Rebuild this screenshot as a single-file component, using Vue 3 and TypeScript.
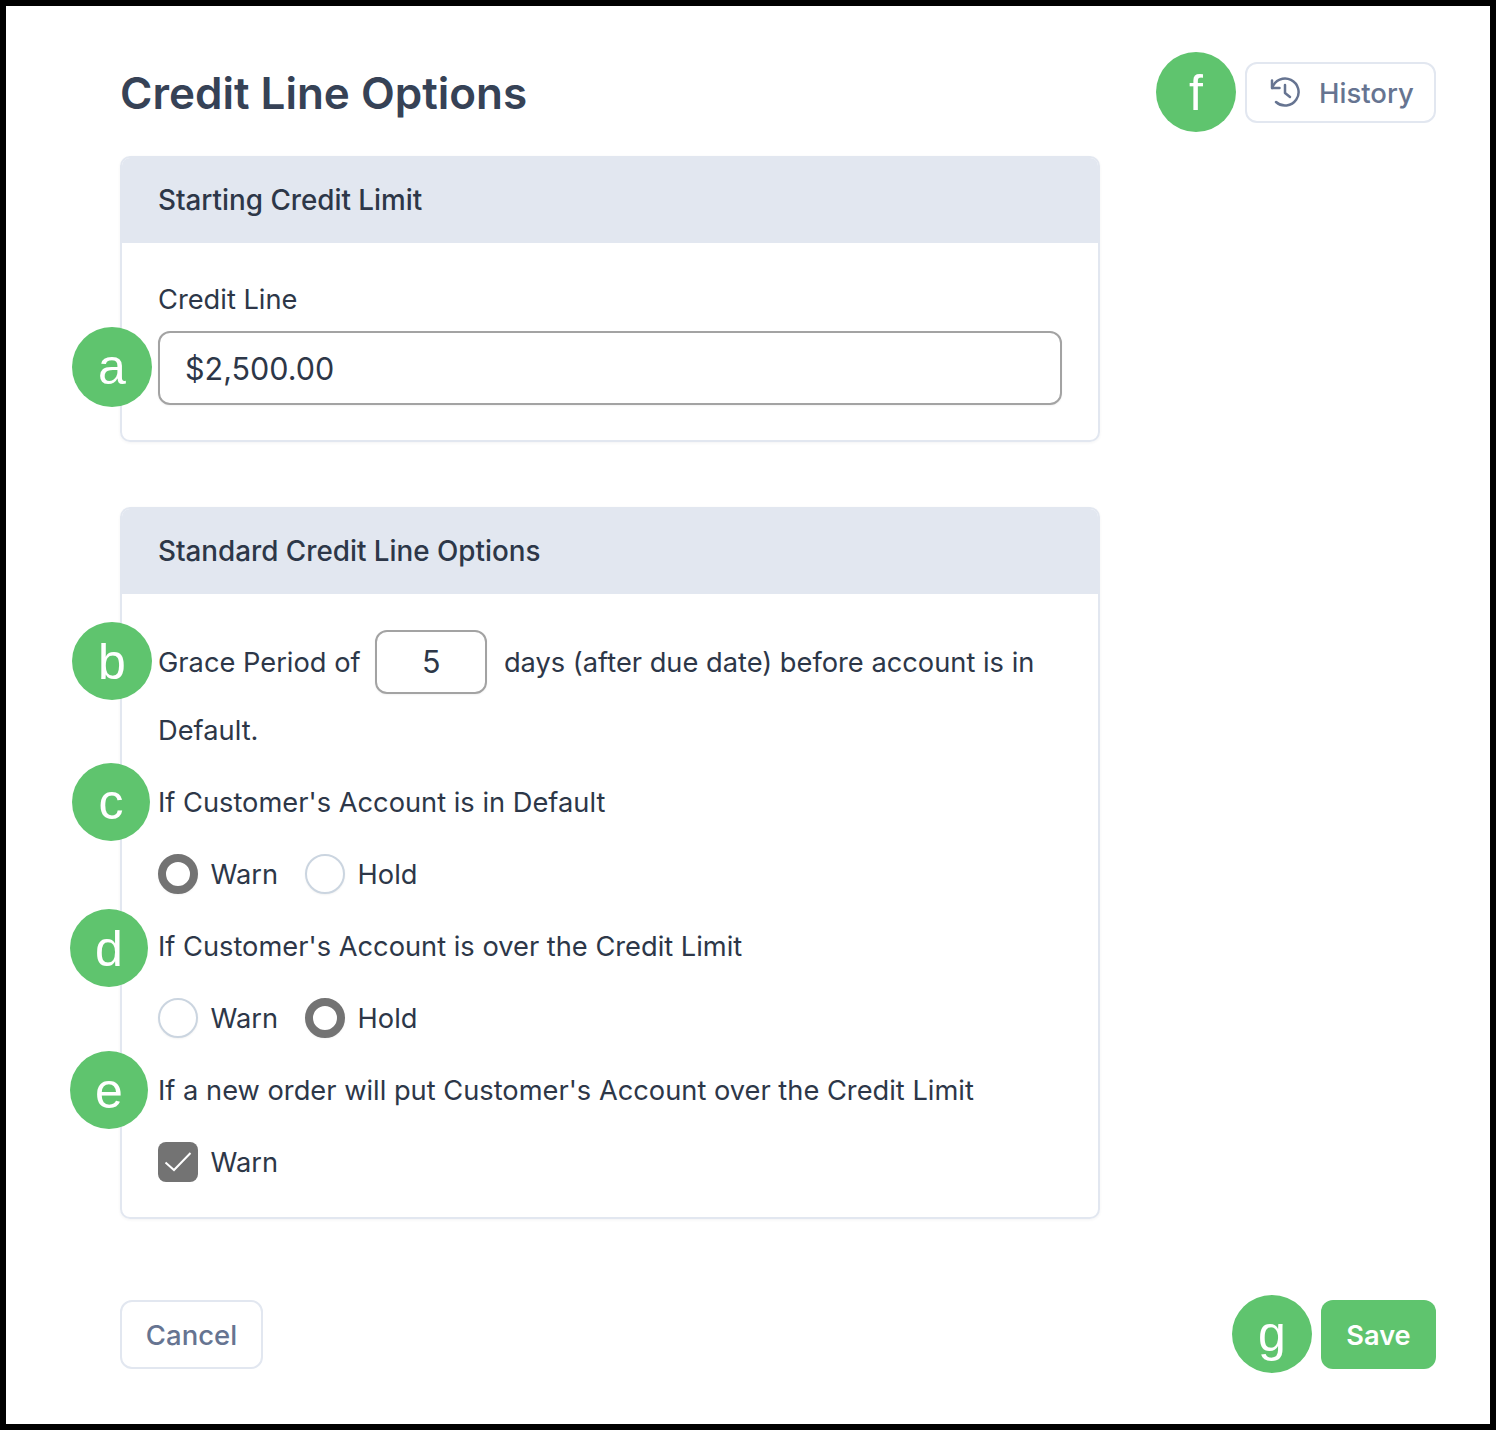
<script setup lang="ts">
interface Choice { label: string; checked: boolean }
const defaultChoices: Choice[] = [
  { label: 'Warn', checked: true },
  { label: 'Hold', checked: false },
]
const limitChoices: Choice[] = [
  { label: 'Warn', checked: false },
  { label: 'Hold', checked: true },
]
</script>

<template>
  <div class="page">
    <header class="top">
      <h1 class="title">Credit Line Options</h1>
      <button class="btn btn-outline history" type="button">
        <svg class="history-icon" viewBox="0 0 32 32" fill="none" stroke="currentColor" stroke-width="2.5" stroke-linecap="round" stroke-linejoin="round">
          <path d="M3 4.5V12h7.5" />
          <path d="M3.2 12A13.5 13.5 0 1 1 7 26" />
          <path d="M16 9v8l5 4" />
        </svg>
        History
      </button>
    </header>

    <section class="card">
      <h2 class="card-head">Starting Credit Limit</h2>
      <div class="card-body first-body">
        <label class="field-label" for="credit-line">Credit Line</label>
        <input id="credit-line" class="text-input" type="text" value="$2,500.00" />
      </div>
    </section>

    <section class="card second">
      <h2 class="card-head">Standard Credit Line Options</h2>
      <div class="card-body options">
        <p class="grace">Grace Period of <input class="days" type="text" value="5" /> days (after due date) before account is in Default.</p>
        <p class="row">If Customer's Account is in Default</p>
        <div class="row choices">
          <span v-for="c in defaultChoices" :key="c.label" class="choice">
            <span class="radio" :class="{ on: c.checked }"></span>{{ c.label }}
          </span>
        </div>
        <p class="row">If Customer's Account is over the Credit Limit</p>
        <div class="row choices">
          <span v-for="c in limitChoices" :key="c.label" class="choice">
            <span class="radio" :class="{ on: c.checked }"></span>{{ c.label }}
          </span>
        </div>
        <p class="row">If a new order will put Customer's Account over the Credit Limit</p>
        <div class="row choices">
          <span class="choice">
            <span class="checkbox">
              <svg viewBox="0 0 40 40" fill="none" stroke="#fff" stroke-width="2"><path d="M7.5 20.5l8.5 7.5L32.5 11" /></svg>
            </span>Warn
          </span>
        </div>
      </div>
    </section>

    <footer class="bottom">
      <button class="btn btn-outline cancel" type="button">Cancel</button>
      <button class="btn save" type="button">Save</button>
    </footer>

    <span class="badge b-a">a</span>
    <span class="badge b-b">b</span>
    <span class="badge b-c">c</span>
    <span class="badge b-d">d</span>
    <span class="badge b-e">e</span>
    <span class="badge b-f">f</span>
    <span class="badge b-g">g</span>
  </div>
</template>

<style>
html, body { margin: 0; background: #fff; }
</style>

<style scoped>
.page {
  position: relative;
  box-sizing: border-box;
  width: 1496px;
  height: 1430px;
  border: 6px solid #000;
  padding: 56px 54px 0 114px;
  background: #fff;
  color: #2d3748;
  font-family: Inter, "Liberation Sans", sans-serif;
  font-size: 27.25px;
}
.top {
  display: flex;
  justify-content: space-between;
  align-items: center;
  height: 61px;
  margin-bottom: 33px;
}
.title {
  margin: 0;
  padding-top: 2px;
  color: #364256;
  font-size: 44px;
  font-weight: 600;
  line-height: 61px;
}
.btn {
  box-sizing: border-box;
  padding: 0;
  font-family: inherit;
  font-size: 27.5px;
  font-weight: 500;
  border-radius: 12px;
  cursor: pointer;
}
.btn-outline {
  background: #fff;
  border: 2px solid #e2e7f0;
  color: #667491;
}
.history {
  display: flex;
  align-items: center;
  gap: 18px;
  width: 191px;
  height: 61px;
  padding: 0 0 0 22px;
}
.history-icon {
  width: 32px;
  height: 32px;
  flex: none;
  margin-top: -2px;
}
.card {
  box-sizing: border-box;
  width: 980px;
  border-radius: 10px;
  border: 2px solid #e2e7f0;
  box-shadow: 0 1px 3px rgba(45, 55, 72, 0.06);
  overflow: hidden;
}
.second { margin-top: 65px; }
.card-head {
  margin: -2px -2px 0;
  height: 87px;
  line-height: 89px;
  padding: 0 38px;
  background: #e2e7f0;
  font-size: 27.8px;
  font-weight: 500;
}
.card-body { padding: 0 36px; }
.first-body { height: 197px; padding-top: 36px; box-sizing: border-box; }
.field-label {
  display: block;
  line-height: 42px;
  height: 42px;
  margin-bottom: 10px;
}
.text-input, .days {
  box-sizing: border-box;
  font-family: inherit;
  font-size: 30.5px;
  color: #2d3748;
  background: #fff;
  border: 2px solid #a3a3a3;
  border-radius: 12px;
  outline: none;
  box-shadow: 0 1px 2px rgba(0, 0, 0, 0.05);
}
.text-input {
  display: block;
  width: 904px;
  height: 74px;
  padding: 0 25px;
}
.options { padding-top: 35px; padding-bottom: 18px; }
.grace {
  margin: 0 0 2px;
  line-height: 68px;
}
.days {
  width: 112px;
  height: 64px;
  margin: 0 9px 0 7px;
  text-align: center;
  vertical-align: -1px;
}
.row {
  margin: 0;
  height: 72px;
  line-height: 72px;
}
.choices {
  display: flex;
  gap: 27px;
}
.choice {
  display: flex;
  align-items: center;
  gap: 12.5px;
}
.radio {
  box-sizing: border-box;
  width: 40px;
  height: 40px;
  margin-bottom: 2px;
  border-radius: 50%;
  border: 2px solid #cbd5e0;
  background: #fff;
  box-shadow: 0 1px 2px rgba(0, 0, 0, 0.05);
}
.radio.on { border: 8px solid #737373; }
.checkbox {
  width: 40px;
  height: 40px;
  margin-bottom: 2px;
  border-radius: 8px;
  background: #737373;
}
.checkbox svg { display: block; width: 40px; height: 40px; }
.bottom {
  display: flex;
  justify-content: space-between;
  margin-top: 81px;
}
.cancel { width: 143px; height: 69px; }
.save {
  width: 115px;
  height: 69px;
  padding-top: 2px;
  border: 0;
  background: #5fc46e;
  color: #fff;
  font-size: 27.2px;
  font-weight: 600;
}
.badge {
  position: absolute;
  box-sizing: border-box;
  width: 80px;
  height: 80px;
  border-radius: 50%;
  background: #5fc46e;
  color: #fff;
  display: flex;
  align-items: center;
  justify-content: center;
  font-family: "Liberation Sans", Arial, sans-serif;
  font-size: 50px;
  line-height: 1;
}
.b-a { left: 66px; top: 321px; }
.b-b { left: 66px; top: 616px; width: 80px; height: 78px; padding-top: 2px; }
.b-c { left: 66px; top: 757px; width: 78px; height: 78px; }
.b-d { left: 64px; top: 903px; width: 78px; height: 78px; padding-top: 2px; }
.b-e { left: 64px; top: 1045px; width: 78px; height: 78px; padding-top: 2px; }
.b-f { left: 1150px; top: 46px; padding-top: 2px; }
.b-g { left: 1226px; top: 1289px; height: 78px; }
</style>
